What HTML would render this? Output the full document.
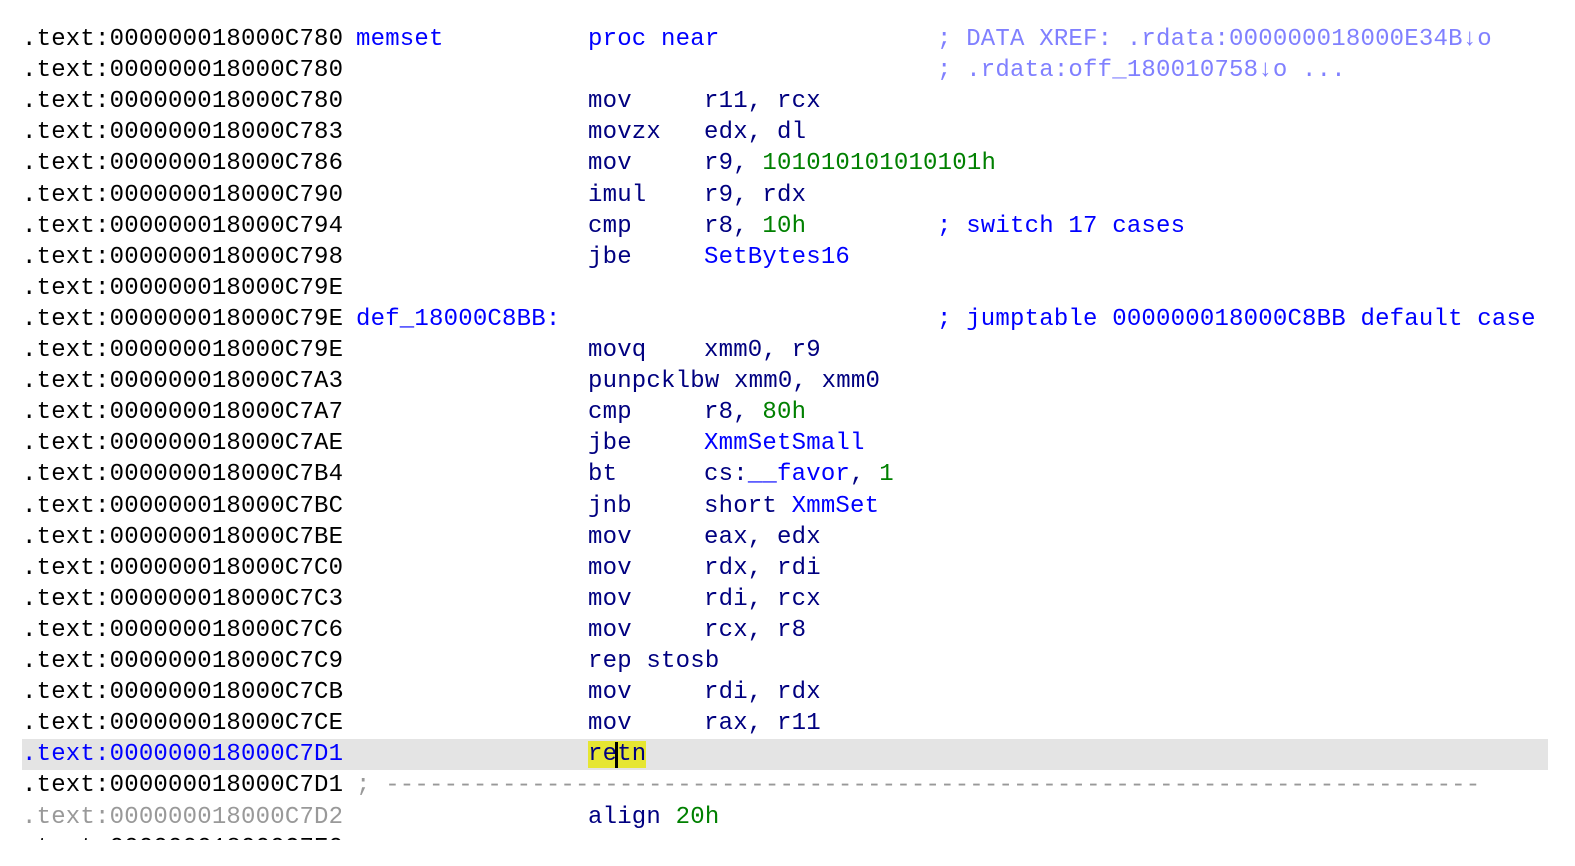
<!DOCTYPE html>
<html><head><meta charset="utf-8"><style>
html,body{margin:0;padding:0;background:#fff;width:1575px;height:866px;overflow:hidden}
#v{position:absolute;left:0;top:0;width:1575px;height:840px;overflow:hidden}
.r{position:absolute;left:0;width:1575px;height:31px;font:24px "Liberation Mono",monospace;letter-spacing:0.2px;line-height:31px;white-space:pre;color:#000}
.r span{position:absolute;top:0}
.a{left:22px}.n{left:356px;color:#0000ff}.m{left:588px;color:#000080}.o{left:704px;color:#000080}.c{left:937px;color:#8080ff}.cb{left:937px;color:#0000ff}
.g{color:#008000}.b{color:#0000ff}
i{font-style:normal}
.hl{background:#e4e4e4;left:22px;width:1526px}
</style></head><body><div id="v">
<div class="r" style="top:24px"><span class="a">.text:000000018000C780</span><span class="n">memset</span><span class="m" style="color:#0000ff">proc near</span><span class="c">; DATA XREF: .rdata:000000018000E34B↓o</span></div>
<div class="r" style="top:55.1px"><span class="a">.text:000000018000C780</span><span class="c">; .rdata:off_180010758↓o ...</span></div>
<div class="r" style="top:86.2px"><span class="a">.text:000000018000C780</span><span class="m">mov</span><span class="o">r11, rcx</span></div>
<div class="r" style="top:117.3px"><span class="a">.text:000000018000C783</span><span class="m">movzx</span><span class="o">edx, dl</span></div>
<div class="r" style="top:148.4px"><span class="a">.text:000000018000C786</span><span class="m">mov</span><span class="o">r9, <i class="g">101010101010101h</i></span></div>
<div class="r" style="top:179.5px"><span class="a">.text:000000018000C790</span><span class="m">imul</span><span class="o">r9, rdx</span></div>
<div class="r" style="top:210.6px"><span class="a">.text:000000018000C794</span><span class="m">cmp</span><span class="o">r8, <i class="g">10h</i></span><span class="cb">; switch 17 cases</span></div>
<div class="r" style="top:241.7px"><span class="a">.text:000000018000C798</span><span class="m">jbe</span><span class="o b">SetBytes16</span></div>
<div class="r" style="top:272.8px"><span class="a">.text:000000018000C79E</span></div>
<div class="r" style="top:303.9px"><span class="a">.text:000000018000C79E</span><span class="n">def_18000C8BB:</span><span class="cb">; jumptable 000000018000C8BB default case</span></div>
<div class="r" style="top:335px"><span class="a">.text:000000018000C79E</span><span class="m">movq</span><span class="o">xmm0, r9</span></div>
<div class="r" style="top:366.1px"><span class="a">.text:000000018000C7A3</span><span class="m">punpcklbw xmm0, xmm0</span></div>
<div class="r" style="top:397.2px"><span class="a">.text:000000018000C7A7</span><span class="m">cmp</span><span class="o">r8, <i class="g">80h</i></span></div>
<div class="r" style="top:428.3px"><span class="a">.text:000000018000C7AE</span><span class="m">jbe</span><span class="o b">XmmSetSmall</span></div>
<div class="r" style="top:459.4px"><span class="a">.text:000000018000C7B4</span><span class="m">bt</span><span class="o">cs:<i class="b">__favor</i>, <i class="g">1</i></span></div>
<div class="r" style="top:490.5px"><span class="a">.text:000000018000C7BC</span><span class="m">jnb</span><span class="o">short <i class="b">XmmSet</i></span></div>
<div class="r" style="top:521.6px"><span class="a">.text:000000018000C7BE</span><span class="m">mov</span><span class="o">eax, edx</span></div>
<div class="r" style="top:552.7px"><span class="a">.text:000000018000C7C0</span><span class="m">mov</span><span class="o">rdx, rdi</span></div>
<div class="r" style="top:583.8px"><span class="a">.text:000000018000C7C3</span><span class="m">mov</span><span class="o">rdi, rcx</span></div>
<div class="r" style="top:614.9px"><span class="a">.text:000000018000C7C6</span><span class="m">mov</span><span class="o">rcx, r8</span></div>
<div class="r" style="top:646px"><span class="a">.text:000000018000C7C9</span><span class="m">rep stosb</span></div>
<div class="r" style="top:677.1px"><span class="a">.text:000000018000C7CB</span><span class="m">mov</span><span class="o">rdi, rdx</span></div>
<div class="r" style="top:708.2px"><span class="a">.text:000000018000C7CE</span><span class="m">mov</span><span class="o">rax, r11</span></div>
<div class="r" style="top:738.5px"><span class="hl" style="height:31px"></span><span class="a" style="color:#0000ff">.text:000000018000C7D1</span><span class="m" style="background:#e6e632;height:27px;top:2px;line-height:27px">retn</span><span style="left:615px;top:3px;width:3px;height:26px;background:#000"></span></div>
<div class="r" style="top:770.4px"><span class="a">.text:000000018000C7D1</span><span style="left:356px;color:#999">; ---------------------------------------------------------------------------</span></div>
<div class="r" style="top:801.5px"><span class="a" style="color:#999">.text:000000018000C7D2</span><span class="m">align <i class="g">20h</i></span></div>
<div class="r" style="top:832.6px"><span class="a">.text:000000018000C7E0</span></div>
</div></body></html>
